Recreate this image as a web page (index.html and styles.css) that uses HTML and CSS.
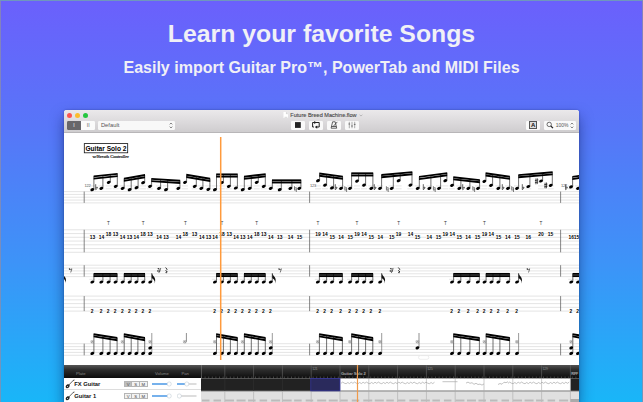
FILE: index.html
```html
<!DOCTYPE html>
<html lang="en">
<head>
    <meta charset="UTF-8">
    <meta name="viewport" content="width=device-width, initial-scale=1.0">
    <title>Learn your favorite Songs</title>
    <link rel="stylesheet" href="styles.css">
</head>
<body>
    <div class="promo">
        <header class="promo-header">
            <h1>Learn your favorite Songs</h1>
            <p>Easily import Guitar Pro™, PowerTab and MIDI Files</p>
        </header>

        <div class="window">
            <div class="chrome">
                <div class="titlebar">
                    <div class="lights">
                        <span class="light red"></span>
                        <span class="light yellow"></span>
                        <span class="light green"></span>
                    </div>
                    <div class="doc-title">
                        <svg width="5" height="6" viewBox="0 0 5 6"><path d="M.5 0H3.4L5 1.6V6H.5Z" fill="#fff"/><path d="M1.5 5.3H4.4M3.4 .2V1.7H4.8" stroke="#aaa" stroke-width=".5" fill="none"/></svg>
                        <span>Future Breed Machine.flow</span>
                        <svg width="4" height="3" viewBox="0 0 4 3"><path d="M.6 .8L2 2L3.4 .8" stroke="#999" stroke-width=".6" fill="none"/></svg>
                    </div>
                </div>
                <div class="toolbar">
                    <div class="segmented">
                        <span class="active">I</span>
                        <span>II</span>
                    </div>
                    <div class="select">
                        <span>Default</span>
                        <svg width="4" height="7" viewBox="0 0 4 7"><path d="M.7 2.4L2 1L3.3 2.4M.7 4.6L2 6L3.3 4.6" stroke="#555" stroke-width=".7" fill="none"/></svg>
                    </div>
                    <div class="transport">
                        <span class="btn"><svg width="8" height="8" viewBox="0 0 8 8"><rect x="1" y="1.1" width="5.8" height="5.8" fill="#222"/></svg></span>
                        <span class="btn"><svg width="10" height="8" viewBox="0 0 10 8"><path d="M4 1.5H1.6V6H3M5 1.5H8.2V6H5" stroke="#222" stroke-width="1" fill="none"/><path d="M3.2 0L5.6 1.5L3.2 3ZM6.2 4.4L3.8 6L6.2 7.7Z" fill="#222"/></svg></span>
                        <span class="btn"><svg width="8" height="8" viewBox="0 0 8 8"><path d="M2.6 .8H5.2L6.7 7.2H1.1ZM1.5 5.5H6.3M3.2 5.4L7.3 .9" stroke="#333" stroke-width=".75" fill="none"/></svg></span>
                        <span class="btn"><svg width="8" height="8" viewBox="0 0 8 8"><path d="M1.3 .8V7.2M4 .8V7.2M6.7 .8V7.2" stroke="#777" stroke-width=".6"/><path d="M.5 3H2.1M3.2 5H4.8M5.9 3.4H7.5" stroke="#555" stroke-width=".8"/></svg></span>
                    </div>
                    <div class="view">
                        <span class="btn"><b class="letter">A</b></span>
                        <span class="btn zoom">
                            <svg width="8" height="8" viewBox="0 0 8 8"><circle cx="3.2" cy="3.4" r="2.2" stroke="#333" stroke-width=".7" fill="none"/><path d="M4.8 5L7 7.2" stroke="#222" stroke-width="1.2"/></svg>
                            <span>100%</span>
                            <svg width="4" height="7" viewBox="0 0 4 7"><path d="M.7 2.4L2 1L3.3 2.4M.7 4.6L2 6L3.3 4.6" stroke="#555" stroke-width=".7" fill="none"/></svg>
                        </span>
                    </div>
                </div>
            </div>

            <svg class="score" id="score" viewBox="64 133 515.5 231.5"></svg>

            <div class="tracks">
                <div class="mixer">
                    <div class="mixer-head">
                        <span class="col-name">Plate</span>
                        <span class="col-volume">Volume</span>
                        <span class="col-pan">Pan</span>
                    </div>
                    <div class="track">
                        <svg class="guitar" width="10" height="10" viewBox="0 0 10 10"><path d="M3.6 6.2L8.7 1" stroke="#222" stroke-width=".7"/><path d="M8 .9L9.6 .5L9 2Z" fill="#333"/><path d="M2.2 5.6C3 4.8 3.3 5.6 4.1 5.4C5 5.3 4.6 6.4 4.5 7.2C4.3 8.7 2.5 9.6 1.3 9C.1 8.2 .7 6.5 2.2 5.6Z" fill="#222"/><path d="M2 7.1L3.2 8.1" stroke="#fff" stroke-width=".7"/></svg>
                        <span class="track-name">FX Guitar</span>
                        <span class="vsm"><i class="on">V</i><i>S</i><i>M</i></span>
                        <svg class="slider" width="20" height="6" viewBox="0 0 20 6"><path d="M0 3H19" stroke="#bbb"/><path d="M0 3H17" stroke="#3f9af5" stroke-width="1.3"/><circle cx="17.2" cy="3" r="2.1" fill="#fff" stroke="#b9c4cf" stroke-width=".5"/></svg>
                        <svg class="slider" width="20" height="6" viewBox="0 0 20 6"><path d="M0 3H19.5" stroke="#bbb"/><path d="M0 3H9.5" stroke="#3f9af5" stroke-width="1.3"/><circle cx="9.8" cy="3" r="2.1" fill="#fff" stroke="#b9c4cf" stroke-width=".5"/></svg>
                    </div>
                    <div class="track">
                        <svg class="guitar" width="10" height="10" viewBox="0 0 10 10"><path d="M3.6 6.2L8.7 1" stroke="#222" stroke-width=".7"/><path d="M8 .9L9.6 .5L9 2Z" fill="#333"/><path d="M2.2 5.6C3 4.8 3.3 5.6 4.1 5.4C5 5.3 4.6 6.4 4.5 7.2C4.3 8.7 2.5 9.6 1.3 9C.1 8.2 .7 6.5 2.2 5.6Z" fill="#222"/><path d="M2 7.1L3.2 8.1" stroke="#fff" stroke-width=".7"/></svg>
                        <span class="track-name">Guitar 1</span>
                        <span class="vsm"><i>V</i><i>S</i><i>M</i></span>
                        <svg class="slider" width="20" height="6" viewBox="0 0 20 6"><path d="M0 3H19" stroke="#bbb"/><path d="M0 3H17" stroke="#3f9af5" stroke-width="1.3"/><circle cx="17.2" cy="3" r="2.1" fill="#fff" stroke="#b9c4cf" stroke-width=".5"/></svg>
                        <svg class="slider" width="20" height="6" viewBox="0 0 20 6"><path d="M2 3H19.5" stroke="#bbb"/><circle cx="2.3" cy="3" r="2.1" fill="#fff" stroke="#b9c4cf" stroke-width=".5"/></svg>
                    </div>
                </div>
                <svg class="timeline" id="timeline" viewBox="201.5 364.5 378 37.5"></svg>
            </div>
        </div>
    </div>

    <script src="score.js"></script>
</body>
</html>
```
FILE: styles.css
```css
* {
    box-sizing: border-box;
}

body {
    margin: 0;
    font-family: "Liberation Sans", Arial, sans-serif;
    overflow: hidden;
}

.promo {
    width: 643px;
    height: 402px;
    overflow: hidden;
    display: flex;
    flex-direction: column;
    align-items: center;
    background: linear-gradient(#6b60fc 0%, #5776f8 32%, #3d93f8 65%, #19b6f8 100%);
    border: 1px solid rgba(140, 140, 170, 0.75);
    border-bottom: 0;
}

.promo-header {
    height: 109px;
    flex: none;
    padding-top: 18px;
    text-align: center;
    color: #f0f0f6;
    font-weight: 700;
}

.promo-header h1 {
    margin: 0;
    font-size: 24.8px;
    line-height: 30px;
}

.promo-header p {
    margin: 8px 0 0;
    font-size: 16.05px;
    line-height: 20px;
}

/* app window */
.window {
    width: 515.5px;
    flex: none;
    background: #fff;
    border-radius: 2.5px 2.5px 0 0;
    box-shadow: 0 7px 14px rgba(10, 20, 80, 0.5), 0 0 2px rgba(10, 20, 80, 0.4);
    display: flex;
    flex-direction: column;
}

.chrome {
    height: 23px;
    background: linear-gradient(#ebe9eb, #cfcdcf);
    border-bottom: 0.5px solid #b8b6b8;
    border-radius: 2.5px 2.5px 0 0;
}

.titlebar {
    height: 10px;
    display: grid;
    grid-template-columns: 1fr auto 1fr;
    align-items: center;
    padding: 0 0 0 3px;
}

.lights {
    display: flex;
    gap: 3.3px;
}

.light {
    width: 5px;
    height: 5px;
    border-radius: 50%;
}

.red {
    background: #fb5550;
}

.yellow {
    background: #fbbc2d;
}

.green {
    background: #23c63f;
}

.doc-title {
    display: flex;
    align-items: center;
    gap: 2px;
    color: #444;
    font-size: 5.55px;
    line-height: 8px;
    -webkit-text-stroke: 0.1px #444;
}

.toolbar {
    height: 10px;
    padding: 0 3px 0 2.8px;
    display: grid;
    grid-template-columns: 28.5px 76.5px auto 1fr;
    column-gap: 3.3px;
    align-items: center;
    font-size: 5.4px;
    line-height: 9px;
    color: #555;
}

.segmented {
    display: flex;
    height: 9px;
    background: #fbfbfb;
    border-radius: 1.2px;
    overflow: hidden;
    text-align: center;
}

.segmented span {
    flex: 1;
    font-size: 5px;
}

.segmented .active {
    background: #68676a;
    color: #fff;
    flex: 1.1;
}

.select {
    display: flex;
    justify-content: space-between;
    align-items: center;
    height: 9px;
    padding: 0 1.6px 0 2.6px;
    background: #f8f8f8;
    border-radius: 1.2px;
    font-size: 5.8px;
}

.transport {
    display: flex;
    gap: 3.7px;
    padding-left: 113px;
}

.btn {
    width: 14.3px;
    height: 9px;
    background: #f9f9f9;
    border-radius: 1.2px;
    display: flex;
    align-items: center;
    justify-content: center;
}

.view {
    display: flex;
    justify-content: flex-end;
    gap: 3.7px;
}

.letter {
    width: 7.4px;
    height: 7.4px;
    border: 0.8px solid #555;
    background: #ddd;
    font-size: 6px;
    line-height: 6px;
    text-align: center;
    color: #111;
}

.zoom {
    width: 32.3px;
    justify-content: space-between;
    padding: 0 2px;
    font-size: 5px;
}

.score {
    display: block;
    width: 515.5px;
    height: 231.5px;
    font-family: "Liberation Sans", Arial, sans-serif;
}

/* track list */
.tracks {
    display: flex;
    height: 38px;
}

.mixer {
    width: 137.5px;
    background: #fff;
}

.mixer-head {
    height: 13.5px;
    display: grid;
    grid-template-columns: 79px 26.5px auto;
    padding: 4px 0 0 12.2px;
    background: linear-gradient(#565656, #2e2e2e 35%, #0c0c0c);
    color: #858585;
    font-size: 4.2px;
    line-height: 9px;
}

.track {
    height: 12.4px;
    display: flex;
    align-items: center;
    border-bottom: 0.5px solid #ddd;
    padding: 0.6px 0 0 1.5px;
}

.guitar {
    flex: none;
}

.track-name {
    width: 49.6px;
    margin-left: -1px;
    font-size: 5.8px;
    font-weight: 700;
    color: #111;
    white-space: nowrap;
}

.vsm {
    display: flex;
    width: 23.8px;
    height: 6.2px;
    border: 0.5px solid #b5b5b5;
    background: #f2f2f2;
}

.vsm i {
    flex: 1;
    font-style: normal;
    font-size: 4.3px;
    line-height: 5.4px;
    text-align: center;
    color: #444;
    border-right: 0.5px solid #b5b5b5;
}

.vsm i:last-child {
    border-right: 0;
}

.vsm .on {
    background: #bdbdbd;
}

.slider {
    flex: none;
    margin-left: 4px;
}

.slider + .slider {
    margin-left: 5.6px;
}

.timeline {
    display: block;
    width: 378px;
    height: 37.5px;
}
```
FILE: score.js
```js
// Everything in the score and the timeline is drawn in page units.
const out = [];
const line = (x1, y1, x2, y2, color, w) =>
    `<path d="M${x1} ${y1}L${x2} ${y2}" stroke="${color}" stroke-width="${w}"/>`;
const text = (x, y, size, str, attrs = '') =>
    `<text x="${x}" y="${y}" font-size="${size}" ${attrs}>${str}</text>`;

const BARS = [84.2, 309.6, 560.6];

function staff(top, gap, count) {
    for (let i = 0; i < count; i++) {
        out.push(line(64, top + i * gap, 580, top + i * gap, '#dadada', 0.7));
    }
    BARS.forEach(x => out.push(line(x, top, x, top + gap * (count - 1), '#555', 0.7)));
}

function head(x, y) {
    out.push(`<ellipse cx="${x}" cy="${y}" rx="2" ry="1.45" fill="#000" transform="rotate(-22 ${x} ${y})"/>`);
}

// double beam (sixteenths) with one stem for each note
function group(notes, y1, y2) {
    const a = notes[0][0] + 1.6;
    const b = notes[notes.length - 1][0] + 1.6;
    notes.forEach(([x, y]) => {
        const top = y1 + (y2 - y1) * (x + 1.6 - a) / (b - a);
        out.push(line(x + 1.6, top, x + 1.6, y, '#333', 0.7));
        head(x, y);
    });
    [0, 2.2].forEach(d => {
        out.push(`<path d="M${a - 0.3} ${y1 + d - 0.95}L${b + 0.3} ${y2 + d - 0.95}V${y2 + d + 0.95}L${a - 0.3} ${y1 + d + 0.95}Z" fill="#000"/>`);
    });
}

function flat(x, y) {
    out.push(`<path d="M${x - 1} ${y - 4}V${y + 1.5}Q${x + 1.7} ${y - 0.4} ${x + 0.6} ${y - 1}Q${x - 0.2} ${y - 1.3} ${x - 1} ${y - 0.1}" fill="none" stroke="#222" stroke-width=".7"/>`);
}

function natural(x, y) {
    out.push(`<path d="M${x - 0.9} ${y - 2.8}V${y + 1.2}L${x + 0.9} ${y + 0.7}M${x + 0.9} ${y + 3}V${y - 1.4}L${x - 0.9} ${y - 0.9}" fill="none" stroke="#333" stroke-width=".6"/>`);
}

function sharp(x, y) {
    out.push(`<path d="M${x - 0.7} ${y - 2.8}V${y + 3}M${x + 0.7} ${y - 3}V${y + 2.8}M${x - 1.7} ${y - 0.7}L${x + 1.7} ${y - 1.4}M${x - 1.7} ${y + 1.4}L${x + 1.7} ${y + 0.7}" fill="none" stroke="#111" stroke-width=".7"/>`);
}

function ghost(x, y) {
    out.push(`<path d="M${x - 1.1} ${y - 1.1}L${x + 1.1} ${y + 1.1}M${x + 1.1} ${y - 1.1}L${x - 1.1} ${y + 1.1}" stroke="#777" stroke-width=".6"/><ellipse cx="${x}" cy="${y}" rx="1.5" ry="1.3" fill="none" stroke="#888" stroke-width=".5"/>`);
}

function flagged(x, y) {
    out.push(line(x + 1.6, 273.2, x + 1.6, y, '#222', 0.7));
    out.push(`<path d="M${x + 1.6} 273.2Q${x + 2.2} 275.3 ${x + 4} 277Q${x + 5.6} 279 ${x + 4.6} 283.4Q${x + 4.9} 280.8 ${x + 3.4} 279.4L${x + 1.6} 278Z" fill="#111"/>`);
    head(x, y);
}

function eighthRest(x, y) {
    out.push(`<circle cx="${x - 1}" cy="${y - 1.2}" r=".7" fill="#222"/><path d="M${x - 1} ${y - 0.7}Q${x + 0.5} ${y - 0.4} ${x + 1.4} ${y - 1.4}L${x + 0.2} ${y + 2.3}" fill="none" stroke="#222" stroke-width=".6"/>`);
}

function sixteenthRest(x, y) {
    eighthRest(x + 0.3, y - 0.2);
    out.push(`<circle cx="${x - 1.2}" cy="${y + 0.9}" r=".7" fill="#222"/><path d="M${x - 1.2} ${y + 1.3}L${x + 0.7} ${y + 0.6}L${x - 0.2} ${y + 3}" fill="none" stroke="#222" stroke-width=".6"/>`);
}

function quarterRest(x, y) {
    out.push(`<path d="M${x - 0.7} ${y - 2.8}L${x + 0.8} ${y - 1}L${x - 0.4} ${y + 0.3}L${x + 1} ${y + 1.7}Q${x - 1.2} ${y + 1.1} ${x} ${y + 2.9}" fill="none" stroke="#222" stroke-width=".9"/>`);
}

staff(191.6, 2.82, 5);
staff(229.8, 3.75, 7);
staff(265.2, 2.85, 5);
staff(296.1, 3.75, 5);
staff(343.7, 2.9, 5);

// section mark
out.push('<rect x="84.3" y="143.6" width="43.4" height="9.2" fill="#fff" stroke="#111" stroke-width=".8"/>');
out.push(text(85.4, 150.6, 6.6, 'Guitar Solo 2', 'font-weight="700" textLength="41"'));
out.push(text(92.4, 158.2, 4.7, 'w/Breath Controller', 'font-family="Liberation Serif, serif" textLength="36.5" stroke="#000" stroke-width=".12"'));

// lead guitar: [notes, beam start, beam end]
const lead = [
    [[[92.3, 189.7], [101.3, 188.3], [108.7, 182.3], [115.7, 186.3]], 176.4, 173.9],
    [[[122.6, 188.3], [129.6, 189.7], [136.5, 187.7], [143.1, 182.7]], 178.7, 175],
    [[[150, 186.3], [159, 188.3], [166, 189.7], [178.3, 188.3]], 178.9, 180.8],
    [[[185, 182.3], [194.7, 186.3], [201.3, 188.3], [208.3, 189.3]], 174.8, 178.8],
    [[[214.9, 189.7], [221.8, 182.7], [228.8, 186.3], [235.8, 188]], 174.4, 174.4],
    [[[242.7, 189.7], [249.7, 188.3], [256.7, 182.3], [263.7, 186.3]], 176.7, 174.2],
    [[[270.7, 188.3], [279.7, 189.7], [290.3, 188.3], [299.3, 188.3]], 180.3, 180.3],
    [[[318, 180.7], [325, 185.1], [332, 187.9], [341, 188.3]], 173.5, 176.6],
    [[[350, 188.3], [357, 181.1], [364, 185.1], [371.3, 188.3]], 173.3, 173.3],
    [[[380, 188.3], [391.7, 188.3], [398.6, 180.7], [410.4, 185.1]], 175, 172.1],
    [[[417.7, 188.3], [429.3, 188.3], [439, 188.3], [445.3, 180.7]], 176.9, 173.1],
    [[[452, 185.3], [459.3, 188.3], [468.3, 188.3], [478, 188.3]], 177.2, 180.1],
    [[[484.3, 181.3], [491, 185.3], [498.3, 188.3], [508, 188.3]], 173.3, 176.7],
    [[[517, 188.3], [528.3, 186.5], [541, 181], [550.7, 185.3]], 175.1, 172.2],
    [[[571, 186.9], [578, 188.3], [590, 188.3]], 176.9, 173.9]
];
lead.forEach(([notes]) => notes.forEach(([x]) => {
    out.push(line(x - 3, 185.9, x + 3, 185.9, '#ccc', 0.5));
    out.push(line(x - 3, 188.8, x + 3, 188.8, '#ccc', 0.5));
}));
lead.forEach(g => group(...g));
[96.7, 336.3, 375.3, 424.3, 463.7, 503.3, 523.3, 566.6].forEach(x => flat(x, 188.2));
[295.4, 345.7, 387.3, 434.3, 473.7, 512.6].forEach(x => natural(x, 189));
sharp(536.6, 181.3);
sharp(545.8, 185.5);
[[84.4, '122'], [310, '123'], [560.9, '124']].forEach(([x, n]) => {
    out.push(text(x, 187.3, 4, n, 'fill="#555" textLength="6.3"'));
});

// tapping marks and tab numbers
[108.4, 143.2, 185.4, 222, 256.7, 317.9, 356.9, 398.6, 445.3, 484.4, 541].forEach(x => {
    out.push(text(x, 225.4, 4.6, 'T', 'text-anchor="middle" fill="#333"'));
});
const tabHigh = [
    [108.5, 18], [115.4, 13], [143.1, 18], [150.1, 13], [185.2, 18], [194.4, 13], [222, 18], [229.2, 13],
    [256.7, 18], [263.7, 13], [318, 19], [324.9, 14], [356.9, 19], [363.9, 14], [398.6, 19], [410.5, 14],
    [445.2, 19], [452.2, 14], [484.6, 19], [491.3, 14], [541, 20], [550.6, 15]
];
const tabLow = [
    [92.4, 13], [101.4, 14], [122.5, 14], [129.5, 13], [136.2, 14], [159.1, 14], [166.1, 13], [178.5, 14],
    [201.7, 14], [208.4, 13], [215, 14], [236, 14], [242.8, 13], [249.7, 14], [270.8, 14], [279.7, 13],
    [290.4, 14], [299.4, 15], [332.2, 15], [340.9, 14], [350.2, 15], [371.2, 15], [380.2, 14], [391.7, 15],
    [417.6, 15], [429.2, 14], [438.5, 15], [459.3, 15], [468, 14], [477.6, 15], [498.5, 15], [507.7, 14],
    [517, 15], [528.3, 16], [571.2, 16], [576.6, 15]
];
const fret = (x, y, n) => out.push(
    `<rect x="${x - 2.7}" y="${y - 3.6}" width="5.4" height="3.7" fill="#fff"/>` +
    text(x, y, 4.9, n, 'text-anchor="middle" font-weight="700"')
);
tabHigh.forEach(([x, n]) => fret(x, 235.6, n));
tabLow.forEach(([x, n]) => fret(x, 239.3, n));

// rhythm guitar and drums share their positions
const rhythm = [
    [92.3, 101.3, 108.5, 115.5], [122.6, 129.6, 136.3, 143.1],
    [214.9, 221.8, 228.8, 235.8], [242.7, 249.7, 256.7, 263.7],
    [317.8, 325, 332, 340.8], [350, 357, 364, 371.2],
    [452, 459.2, 468.3, 477.8], [484.5, 491.4, 498.3, 508],
    [571.2, 578, 588]
];
const singles = [150.2, 270.7, 380.1, 517];
rhythm.forEach(xs => {
    xs.forEach(x => out.push(line(x - 3, 279.3, x + 3, 279.3, '#ccc', 0.5)));
    group(xs.map(x => [x, 282]), 273.9, 273.9);
    group(xs.map(x => [x, 353.4]), 334.2, xs.length < 4 ? 337 : 338);
    ghost(xs[0], 341.8);
});
singles.forEach(x => {
    flagged(x, 282);
    out.push(line(x + 1.6, 333, x + 1.6, 353.4, '#555', 0.6));
    head(x, 353.4);
    ghost(x, 341.8);
});
flagged(61, 282);
[150.2, 270.7, 571.2].forEach(x => head(x, 347.8));
[184.8, 417.4].forEach(x => {
    out.push(line(x + 1.6, 333, x + 1.6, x > 200 ? 347.8 : 341.8, '#444', 0.6));
    ghost(x, 341.8);
});
head(417.4, 347.8);
rhythm.flat().concat(singles).filter(x => x < 580).forEach(x => {
    out.push(`<rect x="${x - 1.7}" y="309" width="3" height="3.8" fill="#fff"/>`);
    out.push(text(x - 0.3, 312.8, 4.9, '2', 'text-anchor="middle" font-weight="700"'));
});
[70.5, 280, 528.3].forEach(x => eighthRest(x, 270.2));
[159, 391.5].forEach(x => sixteenthRest(x, 270));
[166.3, 399].forEach(x => quarterRest(x, 270.3));

out.push('<rect x="418.5" y="355.6" width="10.3" height="3.7" rx="1.8" fill="#fff" stroke="#ddd" stroke-width=".5"/>');
out.push(line(220.7, 137, 220.7, 360, '#ff9a3c', 1.5));
document.getElementById('score').innerHTML = out.join('');

// timeline
const tl = [];
tl.push('<defs><linearGradient id="head" x2="0" y2="1"><stop stop-color="#565656"/><stop offset=".35" stop-color="#2e2e2e"/><stop offset="1" stop-color="#0c0c0c"/></linearGradient></defs>');
tl.push('<rect x="201" y="364" width="380" height="14" fill="url(#head)"/>');
tl.push('<rect x="201" y="378" width="380" height="12.4" fill="#222"/>');
tl.push('<rect x="340.5" y="378" width="230.5" height="12.4" fill="#fff"/>');
tl.push('<rect x="201" y="390.4" width="380" height="12" fill="#e0e0e0"/>');
tl.push(line(201, 390.5, 580, 390.5, '#444', 0.6));
for (let x = 202; x < 580; x += 3.6) {
    tl.push(line(x, 376, x, 377.8, '#777', 0.5));
}
for (let i = 0; i < 13; i++) {
    const x = 225.3 + i * 28.8;
    tl.push(line(x, 364.5, x, 378, '#666', 0.6));
    tl.push(line(x, 378, x, 390.4, x > 340 && x < 571 ? '#aaa' : '#333', 0.6));
    tl.push(line(x, 390.6, x, 402, '#aaa', 0.6));
}
for (let x = 202.5; x < 571; x += 11.52) {
    tl.push(`<rect x="${x}" y="399" width="${x % 2 > 1 ? 9 : 7.5}" height="2" fill="#bbb"/>`);
}
tl.push('<rect x="571" y="398.5" width="9" height="4" fill="#aaa"/>');
tl.push('<rect x="311.3" y="378" width="29.2" height="12.4" fill="#2a2a5c" stroke="#3535a5" stroke-width=".7"/>');

function wave(from, to) {
    let d = '';
    for (let i = 0, x = from; x < to; i++, x += 1.7) {
        d += `${i ? 'L' : 'M'}${x.toFixed(1)} ${382.3 + [0.5, -0.7, 0.4, 0.9, -0.3, 0.8, -0.6][i % 7]}`;
    }
    tl.push(`<path d="${d}" fill="none" stroke="#999" stroke-width=".6"/>`);
}
wave(341.5, 435);
tl.push(line(443, 381.2, 458, 381.2, '#aaa', 0.7));
tl.push('<path d="M466.5 382.6l2-1 2 1.2 2-.6 2 1.6 2-1 2 1.2 2-.4 2 1 2-1.2" fill="none" stroke="#999" stroke-width=".6"/>');
tl.push('<path d="M498.5 384l2-1 2 .7 2-2 2 .5 2-1" fill="none" stroke="#999" stroke-width=".6"/>');
wave(508.5, 571);

[[312.7, 121], [427.8, 125], [543, 129]].forEach(([x, n]) => tl.push(text(x, 369.8, 3.8, n, 'fill="#888" textLength="5.5"')));
tl.push(text(341.4, 374.3, 4.1, 'Guitar Solo 2', 'fill="#aaa" font-weight="700" textLength="25"'));
tl.push(text(571.7, 374.3, 3.4, 'RIFF', 'fill="#aaa" font-weight="700" textLength="7"'));
tl.push(line(201.7, 364.5, 201.7, 378, '#999', 0.6));
tl.push(line(358, 364.5, 358, 402, '#f09a4a', 1.2));
document.getElementById('timeline').innerHTML = tl.join('');
```
